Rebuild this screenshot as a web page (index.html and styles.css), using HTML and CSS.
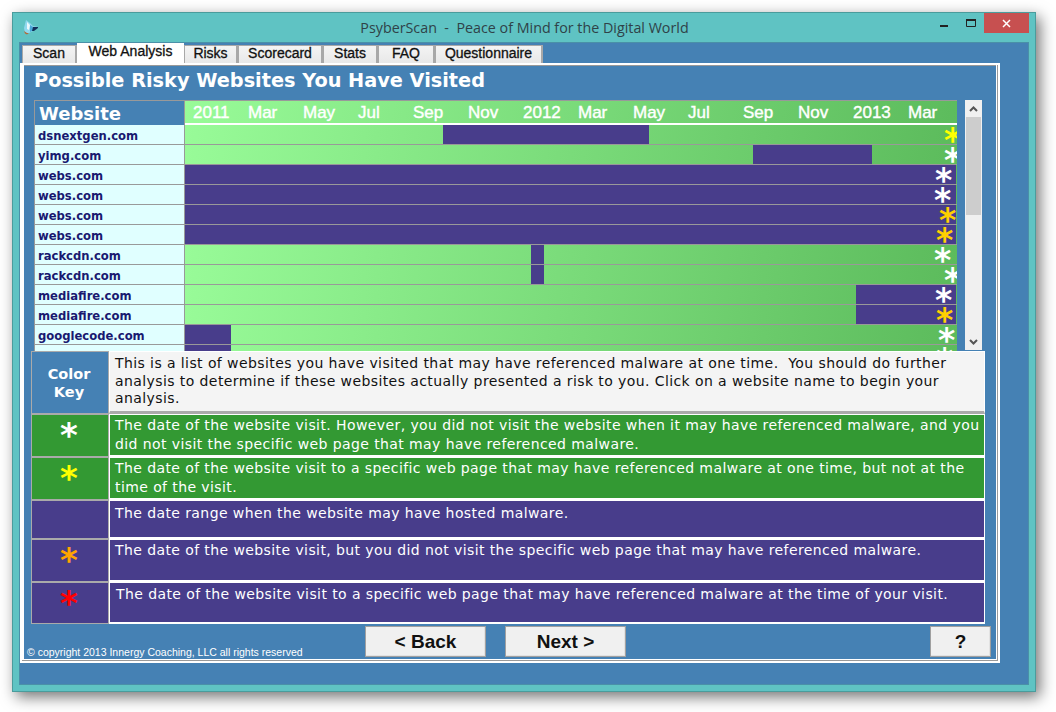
FILE: index.html
```html
<!DOCTYPE html>
<html lang="en">
<head>
<meta charset="utf-8">
<title>PsyberScan</title>
<link rel="stylesheet" href="styles.css">
</head>
<body>
<div class="window">
  <div class="titlebar">
    <svg class="appicon" width="16" height="15" viewBox="0 0 16 15"><path d="M3 0l4 3 3 3 5 1 0 1-5 3-4 2-2 1-2-1-1-5z" fill="#8fd8ee"/><path d="M4 2l3 3-1 5-2-1z" fill="#eaf8fc"/><path d="M9 7l6 0 0 1-4 3-2 0z" fill="#12305a"/><path d="M7 5l3 2-1 4-2 1z" fill="#4aa8d8"/><path d="M1 11l3 2 2 0-2 1.500-2-1z" fill="#b06a3a"/></svg>
    <div class="title">PsyberScan &nbsp;-&nbsp; Peace of Mind for the Digital World</div>
    <div class="winctl">
      <span class="ctl ctl-min"><svg width="8" height="3" viewBox="0 0 8 3"><rect width="8" height="2" y="1" fill="#222"/></svg></span>
      <span class="ctl"><svg width="10" height="8" viewBox="0 0 10 8"><path d="M.5.5h9v7h-9z" fill="none" stroke="#222"/><rect width="10" height="2" fill="#222"/></svg></span>
      <span class="ctl-close"><svg width="9" height="9" viewBox="0 0 9 9"><path d="M1 1l7 7M8 1l-7 7" stroke="#fff" stroke-width="1.5"/></svg></span>
    </div>
  </div>
  <div class="client">
    <div class="tabs">
      <div class="tab t-scan">Scan</div>
      <div class="tab active t-web">Web Analysis</div>
      <div class="tab t-risks">Risks</div>
      <div class="tab t-score">Scorecard</div>
      <div class="tab t-stats">Stats</div>
      <div class="tab t-faq">FAQ</div>
      <div class="tab t-q">Questionnaire</div>
    </div>
    <div class="panel">
      <h1 class="heading">Possible Risky Websites You Have Visited</h1>
      <div class="chart-area">
        <div class="chart">
          <div class="head-row">
            <div class="head-site">Website</div>
            <div class="head-time">
              <span>2011</span><span>Mar</span><span>May</span><span>Jul</span><span>Sep</span><span>Nov</span><span>2012</span><span>Mar</span><span>May</span><span>Jul</span><span>Sep</span><span>Nov</span><span>2013</span><span>Mar</span>
            </div>
          </div>
          <div class="row"><div class="site">dsnextgen.com</div><div class="time"><i class="bar" style="left:258px;width:206px"></i><b class="star yellow" style="left:759px">*</b></div></div>
          <div class="row"><div class="site">yimg.com</div><div class="time"><i class="bar" style="left:568px;width:119px"></i><b class="star" style="left:759px">*</b></div></div>
          <div class="row"><div class="site">webs.com</div><div class="time"><i class="bar" style="left:0;width:771px"></i><b class="star" style="left:750px">*</b></div></div>
          <div class="row"><div class="site">webs.com</div><div class="time"><i class="bar" style="left:0;width:771px"></i><b class="star" style="left:749px">*</b></div></div>
          <div class="row"><div class="site">webs.com</div><div class="time"><i class="bar" style="left:0;width:771px"></i><b class="star gold" style="left:754px">*</b></div></div>
          <div class="row"><div class="site">webs.com</div><div class="time"><i class="bar" style="left:0;width:771px"></i><b class="star gold" style="left:751px">*</b></div></div>
          <div class="row"><div class="site">rackcdn.com</div><div class="time"><i class="bar" style="left:346px;width:13px"></i><b class="star" style="left:749px">*</b></div></div>
          <div class="row"><div class="site">rackcdn.com</div><div class="time"><i class="bar" style="left:346px;width:13px"></i><b class="star" style="left:759px">*</b></div></div>
          <div class="row"><div class="site">mediafire.com</div><div class="time"><i class="bar" style="left:671px;width:100px"></i><b class="star" style="left:750px">*</b></div></div>
          <div class="row"><div class="site">mediafire.com</div><div class="time"><i class="bar" style="left:671px;width:100px"></i><b class="star gold" style="left:751px">*</b></div></div>
          <div class="row"><div class="site">googlecode.com</div><div class="time"><i class="bar" style="left:0;width:46px"></i><b class="star" style="left:753px">*</b></div></div>
          <div class="row"><div class="site"></div><div class="time"><i class="bar" style="left:0;width:46px"></i><b class="star" style="left:751px">*</b></div></div>
        </div>
        <div class="scrollbar">
          <div class="sb-btn"><svg width="9" height="6" viewBox="0 0 9 6"><path d="M1 5l3.500-3.500L8 5" fill="none" stroke="#555" stroke-width="2"/></svg></div>
          <div class="sb-track"><div class="sb-thumb"></div></div>
          <div class="sb-btn"><svg width="9" height="6" viewBox="0 0 9 6"><path d="M1 1l3.500 3.500L8 1" fill="none" stroke="#555" stroke-width="2"/></svg></div>
        </div>
      </div>
      <div class="key">
        <div class="key-row k1"><div class="swatch sw-head">Color<br>Key</div><div class="desc d-head">This is a list of websites you have visited that may have referenced malware at one time.&nbsp; You should do further analysis to determine if these websites actually presented a risk to you. Click on a website name to begin your analysis.</div></div>
        <div class="key-row k2"><div class="swatch green"><b class="kstar">*</b></div><div class="desc green">The date of the website visit. However, you did not visit the website when it may have referenced malware, and you did not visit the specific web page that may have referenced malware.</div></div>
        <div class="key-row k2"><div class="swatch green"><b class="kstar yellow">*</b></div><div class="desc green">The date of the website visit to a specific web page that may have referenced malware at one time, but not at the time of the visit.</div></div>
        <div class="key-row k3"><div class="swatch purple"></div><div class="desc purple d-range">The date range when the website may have hosted malware.</div></div>
        <div class="key-row k2"><div class="swatch purple"><b class="kstar orange">*</b></div><div class="desc purple">The date of the website visit, but you did not visit the specific web page that may have referenced malware.</div></div>
        <div class="key-row k5"><div class="swatch purple"><b class="kstar red">*</b></div><div class="desc purple d-last">The date of the website visit to a specific web page that may have referenced malware at the time of your visit.</div></div>
      </div>
      <div class="footer">
        <div class="copy">© copyright 2013 Innergy Coaching, LLC all rights reserved</div>
        <button class="btn b-back">&lt; Back</button>
        <button class="btn b-next">Next &gt;</button>
        <button class="btn b-help">?</button>
      </div>
    </div>
  </div>
</div>
</body>
</html>
```
FILE: styles.css
```css
* { box-sizing: border-box; }
html, body { margin: 0; padding: 0; background: #fff; overflow: hidden; }
body { width: 1056px; height: 712px; padding: 12px 0 0 12px; font-family: "DejaVu Sans", sans-serif; }

.window { width: 1024px; height: 680px; background: #5fc3c3; border: 1px solid #4a9c9c; box-shadow: 4px 5px 14px rgba(0,0,0,.55); display: flex; flex-direction: column; }

.titlebar { height: 29px; flex: none; display: flex; align-items: flex-start; }
.appicon { margin: 7px 0 0 10px; flex: none; }
.title { flex: 1; text-align: center; font: 14.3px/30px "Open Sans", sans-serif; color: #2f4248; padding-left: 80px; white-space: nowrap; }
.winctl { display: flex; align-items: flex-start; flex: none; margin-right: 6px; }
.ctl { width: 27px; height: 20px; display: flex; align-items: center; justify-content: center; }
.ctl-min { padding-top: 5px; }
.ctl-close { width: 45px; height: 20px; background: #c75050; display: flex; align-items: center; justify-content: center; }

.client { flex: 1; margin: 0 6px 6px; background: #4581b4; border: 1px solid #4a90a8; display: flex; flex-direction: column; }

.tabs { display: flex; height: 20px; flex: none; padding-left: 2px; align-items: flex-end; position: relative; z-index: 1; }
.tab { height: 18px; background: linear-gradient(#f4f4f4, #e8e8e8); border: 1px solid #a8a8a8; border-right-width: 2px; border-bottom: 0; font: 14px/15px "Liberation Sans", sans-serif; -webkit-text-stroke: .3px #111; color: #111; text-align: center; flex: none; }
.tab.active { height: 21px; background: #fff; border: 0; margin-bottom: -1px; line-height: 16px; }
.t-scan { width: 55px; } .t-web { width: 107px; } .t-risks { width: 54px; } .t-score { width: 85px; }
.t-stats { width: 55px; } .t-faq { width: 57px; } .t-q { width: 108px; }

.panel { width: 980px; height: 600px; background: #4581b4; border: 2px solid #fff; box-shadow: inset -1px -1px 0 #999, inset -2px -2px 0 #fff, inset 2px 0 0 #fff, inset 0 1px 0 #999; display: flex; flex-direction: column; position: relative; }
.heading { margin: 0; height: 35px; flex: none; padding-left: 12px; font: bold 19.3px/32px "DejaVu Sans", sans-serif; color: #fff; white-space: nowrap; }

.chart-area { display: flex; height: 251px; flex: none; padding-left: 12px; }
.chart { width: 923px; height: 251px; overflow: hidden; flex: none; border: 1px solid #999; border-bottom: 0; border-right: 0; }
.head-row { height: 24px; display: flex; }
.head-site { width: 150px; flex: none; background: #4581b4; border-right: 1px solid #999; color: #fff; font: bold 18px/25px "DejaVu Sans", sans-serif; padding-left: 4px; }
.head-time { flex: 1; background: linear-gradient(100deg, #98fb98, #5cbb5c); color: #fff; font: 17px/24px "Liberation Sans", sans-serif; display: flex; padding-left: 8px; border-bottom: 2px solid #fff; }
.head-time span { width: 55px; flex: none; -webkit-text-stroke: .4px #fff; }

.row { height: 20px; display: flex; }
.site { width: 150px; flex: none; background: #e0ffff; border-right: 1px solid #999; border-bottom: 1px solid #999; color: #191970; font: bold 11.6px/15px "DejaVu Sans", sans-serif; padding: 4px 0 0 3px; }
.time { position: relative; flex: 1; overflow: hidden; background: linear-gradient(100deg, #98fb98, #5cbb5c); border-bottom: 1px solid #999; }
.bar { position: absolute; top: 0; bottom: 0; background: #483d8b; }
.star { position: absolute; top: -1px; font: bold 33px/34px "DejaVu Sans", sans-serif; color: #fff; }
.yellow { color: #ffff00; }
.gold { color: #ffd000; }
.orange { color: #ffa500; }
.red { color: #ff0000; }

.scrollbar { width: 17px; height: 250px; margin-left: 8px; flex: none; background: #f0f0f0; display: flex; flex-direction: column; }
.sb-btn { height: 17px; flex: none; display: flex; align-items: center; justify-content: center; }
.sb-track { flex: 1; padding: 0 1px; }
.sb-thumb { height: 98px; background: #cdcdcd; }

.key { flex: none; margin-left: 9px; width: 954px; display: flex; flex-direction: column; }
.key-row { display: flex; }
.k1 { height: 63px; }
.k2 { height: 43px; }
.k3 { height: 39px; }
.k5 { height: 42px; }
.swatch { width: 78px; flex: none; border: 1px solid #aaa; color: #fff; display: flex; align-items: flex-start; justify-content: center; text-align: center; padding-right: 2px; }
.desc { flex: 1; border: 1px solid #fff; border-bottom-width: 2px; padding: 1px 0 0 5px; font: 14px/18.6px "DejaVu Sans", sans-serif; letter-spacing: .41px; color: #fff; }
.sw-head { background: #4581b4; font: bold 14.5px/18px "DejaVu Sans", sans-serif; padding-top: 13px; }
.d-head { background: #f4f4f4; color: #111; border-bottom: 3px solid #aaa; padding-top: 3px; line-height: 17.6px; }
.green { background: #339933; }
.purple { background: #483d8b; }
.d-range { padding-top: 3px; }
.d-last { padding-left: 6px; padding-top: 2px; }
.kstar { font: bold 34px/34px "DejaVu Sans", sans-serif; color: #fff; height: 34px; margin-top: 3px; }
.kstar.yellow { color: #ffff00; } .kstar.orange { color: #ffa500; } .kstar.red { color: #ff0000; }

.footer { flex: 1; position: relative; display: flex; align-items: flex-start; padding-top: 2px; }
.copy { position: absolute; left: 5px; bottom: 2px; font: 10.5px/13px "Liberation Sans", sans-serif; color: #fff; }
.btn { height: 31px; background: #f0f0f0; border: 1px solid #a0a0a0; box-shadow: inset -1px -1px 0 #e2e2e2; font: bold 19px/1 "Liberation Sans", sans-serif; color: #111; padding: 0; flex: none; }
.b-back { width: 121px; margin-left: 343px; }
.b-next { width: 121px; margin-left: 19px; }
.b-help { width: 61px; margin-left: 304px; }
```
